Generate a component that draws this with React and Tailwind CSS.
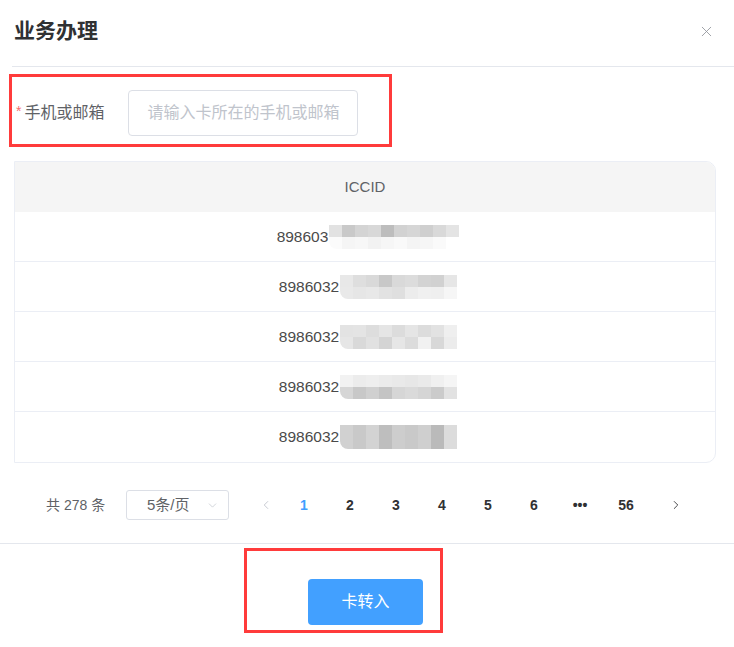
import { X, ChevronDown, ChevronLeft, ChevronRight } from 'lucide-react'

const FONT = { fontFamily: '"Liberation Sans", "Noto Sans CJK SC", sans-serif' }

// pixelated mosaic that hides the rest of each ICCID
const MOSAICS = [
  [['#e2e2e2', '#c9c9c9', '#d4d4d4', '#d8d8d8', '#bdbdbd', '#d2d2d2', '#d6d6d6', '#cfcfcf', '#d9d9d9', '#e4e4e4'], ['#fbfbfb', '#f5f5f5', '#f7f7f7', '#f2f2f2', '#f6f6f6', '#f9f9f9', '#f4f4f4', '#f6f6f6', '#fafafa', '#ffffff']],
  [['#e8e8e8', '#dedede', '#d9d9d9', '#c8c8c8', '#d9d9d9', '#dcdcdc', '#d3d3d3', '#d1d1d1', '#e6e6e6'], ['#e9e9e9', '#e6e6e6', '#e8e8e8', '#e2e2e2', '#dfdfdf', '#ececec', '#f0f0f0', '#efefef', '#f6f6f6']],
  [['#e3e3e3', '#e4e4e4', '#dddddd', '#e5e5e5', '#dcdcdc', '#e5e5e5', '#dcdcdc', '#e2e2e2', '#efefef'], ['#e6e6e6', '#d9d9d9', '#e1e1e1', '#d4d4d4', '#e6e6e6', '#dcdcdc', '#f1f1f1', '#d8d8d8', '#ececec']],
  [['#f2f2f2', '#ececec', '#eeeeee', '#ebebeb', '#e9e9e9', '#e7e7e7', '#eaeaea', '#f0f0f0', '#f5f5f5'], ['#d6d6d6', '#c8c8c8', '#d0d0d0', '#c4c4c4', '#d6d6d6', '#dadada', '#d5d5d5', '#cbcbcb', '#e2e2e2']],
  [['#d1d1d1', '#c9c9c9', '#d3d3d3', '#bebebe', '#cdcdcd', '#c9c9c9', '#cfcfcf', '#bababa', '#dcdcdc'], ['#d1d1d1', '#c9c9c9', '#d3d3d3', '#bebebe', '#cdcdcd', '#c9c9c9', '#cfcfcf', '#bababa', '#dcdcdc']],
]

const ROWS = ['898603', '8986032', '8986032', '8986032', '8986032']

function Mosaic({ rows }) {
  return (
    <div className="flex flex-col ml-[1px] rounded-bl-[8px] overflow-hidden">
      {rows.map((row, i) => (
        <div key={i} className="flex">
          {row.map((c, j) => (
            <div key={j} className="w-[13px] h-[12px]" style={{ backgroundColor: c }} />
          ))}
        </div>
      ))}
    </div>
  )
}

const PAGES = ['1', '2', '3', '4', '5', '6', '•••', '56']

export default function App() {
  return (
    <div className="w-[734px] h-[647px] bg-white overflow-hidden" style={FONT}>
      {/* Header */}
      <div className="h-[66px] flex items-center justify-between pl-[14px] pr-[19px] pb-[4px]">
        <h2 className="text-[21px] font-bold text-[#303133]">业务办理</h2>
        <X className="w-[17px] h-[17px] text-[#909399]" strokeWidth={1.2} />
      </div>
      <div className="ml-[12px] border-b border-[#e4e7ed]" />

      {/* Form item */}
      <div className="mt-[7px] ml-[9px] w-[383px] h-[73px] border-[3px] border-[#ff3b3b] flex items-center pl-[4px] pt-[5px]">
        <span className="text-[#f56c6c] text-[14px] mr-[3px] mt-[-4px]">*</span>
        <span className="text-[16px] text-[#606266]">手机或邮箱</span>
        <div className="ml-[24px] w-[230px] h-[46px] border border-[#dcdfe6] rounded-[4px] flex items-center pl-[18px]">
          <span className="text-[16px] text-[#c0c4cc]">请输入卡所在的手机或邮箱</span>
        </div>
      </div>

      {/* Table */}
      <div className="mt-[14px] ml-[14px] w-[702px] border border-[#ebeef5] rounded-r-[10px] overflow-hidden">
        <div className="h-[50px] bg-[#f5f5f5] flex items-center justify-center text-[15px] text-[#606266]">
          ICCID
        </div>
        {ROWS.map((num, i) => (
          <div
            key={i}
            className={`h-[50px] flex items-center justify-center pl-[6px] ${i < ROWS.length - 1 ? 'border-b border-[#ebeef5]' : ''}`}
          >
            <span className="text-[15.5px] text-[#4a4a4a]">{num}</span>
            <Mosaic rows={MOSAICS[i]} />
          </div>
        ))}
      </div>

      {/* Pagination */}
      <div className="mt-[27px] flex items-center h-[30px] pl-[46px]">
        <span className="text-[14px] text-[#606266] w-[80px]">共 278 条</span>
        <div className="w-[103px] h-[30px] border border-[#dcdfe6] rounded-[3px] flex items-center justify-between pl-[20px] pr-[9px]">
          <span className="text-[15px] text-[#606266]">5条/页</span>
          <ChevronDown className="w-[13px] h-[13px] text-[#c0c4cc]" strokeWidth={1.3} />
        </div>
        <div className="ml-[22px] w-[30px] flex justify-center">
          <ChevronLeft className="w-[14px] h-[14px] text-[#c0c4cc]" strokeWidth={1.5} />
        </div>
        {PAGES.map((p) => (
          <div
            key={p}
            className={`w-[46px] text-center text-[14px] font-bold ${p === '1' ? 'text-[#409eff]' : 'text-[#303133]'}`}
          >
            {p}
          </div>
        ))}
        <div className="ml-[4px] w-[46px] flex justify-center">
          <ChevronRight className="w-[14px] h-[14px] text-[#303133]" strokeWidth={1.5} />
        </div>
      </div>

      {/* Footer */}
      <div className="mt-[23px] border-b border-[#e4e7ed]" />
      <div className="mt-[4px] ml-[244px] w-[199px] h-[85px] border-[3px] border-[#ff3b3b] pl-[61px] pt-[28px]">
        <button className="w-[115px] h-[46px] rounded-[4px] bg-[#42a0ff] text-white text-[16px]">卡转入</button>
      </div>
    </div>
  )
}
